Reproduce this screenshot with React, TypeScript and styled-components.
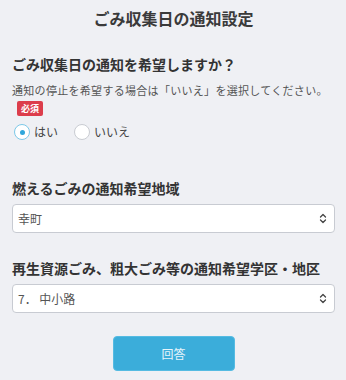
import React, { useState } from 'react';
import styled, { createGlobalStyle } from 'styled-components';

const GlobalStyle = createGlobalStyle`
  html, body {
    margin: 0;
    padding: 0;
    background: #eff0f4;
  }
  body {
    font-family: "Noto Sans CJK JP", "Noto Sans", sans-serif;
    color: #333;
  }
`;

const Page = styled.div`
  padding: 8px 11px 0 12px;
`;

const Title = styled.h1`
  margin: 0;
  font-size: 16px;
  line-height: 20px;
  font-weight: 700;
  text-align: center;
  color: #3a3a3a;
`;

const Section = styled.section<{ $top: number }>`
  margin-top: ${(p) => p.$top}px;
`;

const Heading = styled.h2`
  margin: 0;
  font-size: 14px;
  line-height: 20px;
  font-weight: 700;
  color: #333;
`;

const Note = styled.p`
  margin: 8px 0 0;
  font-size: 11px;
  line-height: 16px;
  letter-spacing: 0.3px;
  color: #555;
`;

const Badge = styled.span`
  display: block;
  width: fit-content;
  margin: 3px 0 0 5px;
  padding: 0 4px;
  height: 15px;
  line-height: 15px;
  border-radius: 2px;
  background: #dc3d4b;
  color: #fff;
  font-size: 9px;
  font-weight: 700;
`;

const RadioRow = styled.div`
  display: flex;
  align-items: center;
  gap: 16px;
  margin: 8px 0 0 2px;
`;

const RadioLabel = styled.label`
  display: flex;
  align-items: center;
  gap: 4px;
  font-size: 12px;
  line-height: 16px;
  color: #444;
  cursor: pointer;
`;

const Circle = styled.span<{ $on: boolean }>`
  box-sizing: border-box;
  width: 16px;
  height: 16px;
  border-radius: 50%;
  background: #fff;
  border: ${(p) => (p.$on ? '1.5px solid #7cc8e8' : '1px solid #c9ccd2')};
  display: flex;
  align-items: center;
  justify-content: center;

  &::after {
    content: '';
    width: 5px;
    height: 5px;
    border-radius: 50%;
    background: #2fa6db;
    display: ${(p) => (p.$on ? 'block' : 'none')};
  }
`;

const SelectBox = styled.div`
  box-sizing: border-box;
  margin-top: 6px;
  height: 29px;
  display: flex;
  align-items: center;
  justify-content: space-between;
  padding: 0 7px 0 5px;
  background: #fff;
  border: 1px solid #c8cbd2;
  border-radius: 4px;
  font-size: 12px;
  color: #555;
`;

const Actions = styled.div`
  display: flex;
  justify-content: center;
  margin-top: 23px;
`;

const Submit = styled.button`
  width: 122px;
  height: 35px;
  border: 1px solid #55bbe2;
  border-radius: 4px;
  background: #3badda;
  color: #e6f4fb;
  font-family: inherit;
  font-size: 12px;
  cursor: pointer;
`;

const Chevrons = () => (
  <svg width="8" height="11" viewBox="0 0 8 11" fill="none" stroke="#444" strokeWidth="1.3" strokeLinecap="round" strokeLinejoin="round">
    <path d="M1.5 4 L4 1.5 L6.5 4" />
    <path d="M1.5 7 L4 9.5 L6.5 7" />
  </svg>
);

const Select = ({ value }: { value: string }) => (
  <SelectBox>
    <span>{value}</span>
    <Chevrons />
  </SelectBox>
);

export default function App() {
  const [notify, setNotify] = useState(true);

  return (
    <>
      <GlobalStyle />
      <Page>
        <Title>ごみ収集日の通知設定</Title>

        <Section $top={26}>
          <Heading>ごみ収集日の通知を希望しますか？</Heading>
          <Note>通知の停止を希望する場合は「いいえ」を選択してください。</Note>
          <Badge>必須</Badge>
          <RadioRow>
            <RadioLabel onClick={() => setNotify(true)}>
              <Circle $on={notify} />
              はい
            </RadioLabel>
            <RadioLabel onClick={() => setNotify(false)}>
              <Circle $on={!notify} />
              いいえ
            </RadioLabel>
          </RadioRow>
        </Section>

        <Section $top={38}>
          <Heading>燃えるごみの通知希望地域</Heading>
          <Select value="幸町" />
        </Section>

        <Section $top={25}>
          <Heading>再生資源ごみ、粗大ごみ等の通知希望学区・地区</Heading>
          <Select value="7． 中小路" />
        </Section>

        <Actions>
          <Submit type="button">回答</Submit>
        </Actions>
      </Page>
    </>
  );
}
